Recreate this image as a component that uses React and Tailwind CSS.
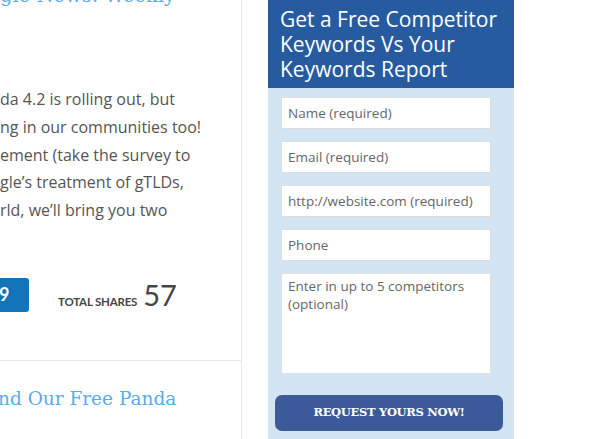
import React from "react";

const serif = { fontFamily: '"DejaVu Serif", "Liberation Serif", serif' };

export default function App() {
  return (
    <div className="w-[600px] h-[439px] overflow-hidden flex bg-white" style={{ fontFamily: '"Open Sans", sans-serif' }}>
      <div className="w-[242px] shrink-0 border-r border-[#e6e6e6] flex flex-col overflow-hidden">
        <div className="text-[19.5px] leading-[26px] text-[#5aabec] -mt-[17px] whitespace-nowrap" style={serif}>
          gle News: Weekly
        </div>
        <div className="mt-[77px] text-[16px] leading-[27.8px] text-[#555] whitespace-nowrap">
          <div>da 4.2 is rolling out, but</div>
          <div>ng in our communities too!</div>
          <div>ement (take the survey to</div>
          <div>gle’s treatment of gTLDs,</div>
          <div>rld, we’ll bring you two</div>
        </div>
        <div className="mt-[53px] flex items-center h-[34px]">
          <div className="w-[29px] h-[34px] bg-[#1474b9] rounded-r-[3px] flex items-center justify-start pl-[0px] text-white text-[18px] font-bold" style={{ fontFamily: 'Lato, sans-serif' }}>
            <span className="-ml-[1px]">9</span>
          </div>
          <div className="ml-[29px] flex items-baseline gap-[6px] text-[#454545]" style={{ fontFamily: 'Lato, sans-serif' }}>
            <span className="text-[11.5px] font-bold tracking-[-0.2px]">TOTAL SHARES</span>
            <span className="text-[29px] leading-none">57</span>
          </div>
        </div>
        <div className="mt-[48px] border-t border-[#e8e8e8]" />
        <div className="mt-[25px] text-[18.5px] leading-[26px] text-[#5aabec] whitespace-nowrap -ml-[2px]" style={serif}>
          nd Our Free Panda
        </div>
      </div>
      <div className="ml-[26px] w-[246px] shrink-0 flex flex-col">
        <div className="h-[88px] bg-[#275b9f] px-[12px] pt-[7px] text-white text-[21px] leading-[25px] whitespace-nowrap">
          <div>Get a Free Competitor</div>
          <div>Keywords Vs Your</div>
          <div>Keywords Report</div>
        </div>
        <div className="flex-1 bg-[#d3e4f2] pt-[9px] px-[13px] flex flex-col">
          {["Name (required)", "Email (required)", "http://website.com (required)", "Phone"].map((p) => (
            <input
              key={p}
              placeholder={p}
              className="w-[210px] h-[32px] mb-[12px] bg-white border border-[#dcdcdc] px-[6px] text-[13.5px] text-[#555] placeholder:text-[#666] outline-none"
            />
          ))}
          <textarea
            placeholder="Enter in up to 5 competitors (optional)"
            className="w-[210px] h-[101px] bg-white border border-[#e0e0e0] px-[6px] pt-[3px] text-[13.5px] leading-[18px] text-[#555] placeholder:text-[#666] outline-none resize-none"
          />
          <button className="mt-[21px] -ml-[6px] w-[228px] h-[36px] rounded-[7px] bg-[#3c5a99] text-white text-[11.5px] font-bold tracking-[-0.3px]" style={serif}>
            REQUEST YOURS NOW!
          </button>
        </div>
      </div>
    </div>
  );
}
